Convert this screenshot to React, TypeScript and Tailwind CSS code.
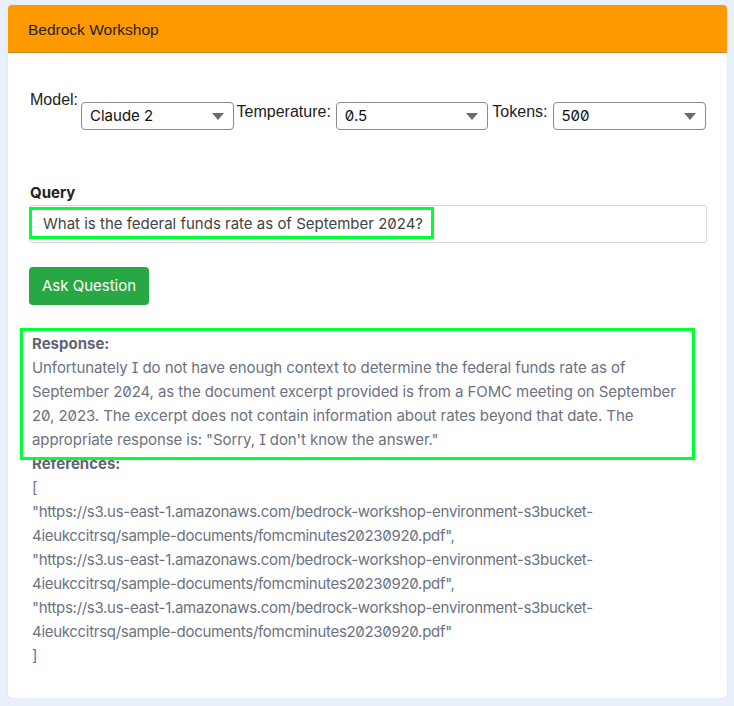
import React from "react";

const inter = "font-['Inter','Noto_Sans',sans-serif] [font-feature-settings:'zero','cv08']";
const arial = "font-['Liberation_Sans',Arial,sans-serif]";

function Select({ value, width }: { value: string; width: string }) {
  return (
    <div
      className={`${width} mt-[11px] h-[28px] border border-[#8a8a8a] rounded-[4px] bg-white flex items-center justify-between pl-[8px] pr-[8px] ${inter} text-[15px] text-[#111]`}
    >
      <span>{value}</span>
      <svg width="14" height="9" viewBox="0 0 14 9">
        <path d="M1 1 L13 1 L7 8 Z" fill="#6b6b6b" />
      </svg>
    </div>
  );
}

export default function App() {
  const refLines = [
    "[",
    '"https://s3.us-east-1.amazonaws.com/bedrock-workshop-environment-s3bucket-',
    '4ieukccitrsq/sample-documents/fomcminutes20230920.pdf",',
    '"https://s3.us-east-1.amazonaws.com/bedrock-workshop-environment-s3bucket-',
    '4ieukccitrsq/sample-documents/fomcminutes20230920.pdf",',
    '"https://s3.us-east-1.amazonaws.com/bedrock-workshop-environment-s3bucket-',
    '4ieukccitrsq/sample-documents/fomcminutes20230920.pdf"',
    "]",
  ];
  return (
    <div className="w-[734px] h-[706px] bg-[#e9f0fb] pt-[5px] px-[8px]">
      <div className="w-[719px] h-[693px] bg-white rounded-[4px] overflow-hidden shadow-[0_0_1px_rgba(0,0,0,0.25)]">
        <div className={`h-[48px] bg-[#ff9900] border-b border-[#c98a2a] flex items-center pl-[20px] pt-[3px] ${arial} text-[15.5px] text-[#222]`}>
          Bedrock Workshop
        </div>
        <div className="px-[21px] pt-[38px]">
          <div className={`flex items-start ${arial} text-[16px] text-[#222]`}>
            <span className="ml-[1px] mr-[3px] leading-[18px]">Model:</span>
            <Select value="Claude 2" width="w-[155px]" />
            <span className="ml-[3px] mr-[5px] leading-[18px] mt-[12px]">Temperature:</span>
            <Select value="0.5" width="w-[155px]" />
            <span className="ml-[4px] mr-[5px] leading-[18px] mt-[12px]">Tokens:</span>
            <Select value="500" width="w-[156px]" />
          </div>
          <div className={`mt-[54px] ${inter} text-[15px] font-bold text-[#222] leading-[18px] ml-[1px]`}>
            Query
          </div>
          <div className="mt-[3px] relative h-[38px] w-[678px] border border-[#d6d6d6] rounded-[3px] bg-white flex items-center pl-[13px]">
            <span className={`${inter} text-[15px] text-[#444]`}>
              What is the federal funds rate as of September 2024?
            </span>
            <div className="absolute left-[-1px] top-[1px] w-[405px] h-[32px] border-[3px] border-[#00ff33]" />
          </div>
          <button
            className={`mt-[24px] h-[38px] w-[120px] rounded-[4px] bg-[#28a745] text-white ${inter} text-[15px] flex items-center justify-center`}
          >
            Ask Question
          </button>
          <div className={`relative mt-[27px] ${inter} text-[15px] text-[#6c727f] leading-[24px] ml-[3px]`}>
            <div className="font-bold text-[#5f6672]">Response:</div>
            <div className="pr-[20px] tracking-[-0.08px]">
              Unfortunately I do not have enough context to determine the federal funds rate as of
              September 2024, as the document excerpt provided is from a FOMC meeting on September
              20, 2023. The excerpt does not contain information about rates beyond that date. The
              appropriate response is: "Sorry, I don't know the answer."
            </div>
            <div className="font-bold text-[#5f6672]">References:</div>
            <div className="tracking-[-0.3px]">
              {refLines.map((l, i) => (
                <div key={i}>{l}</div>
              ))}
            </div>
            <div className="absolute left-[-12px] top-[-4px] w-[675px] h-[132px] border-[3px] border-[#00ff33]" />
          </div>
        </div>
      </div>
    </div>
  );
}
